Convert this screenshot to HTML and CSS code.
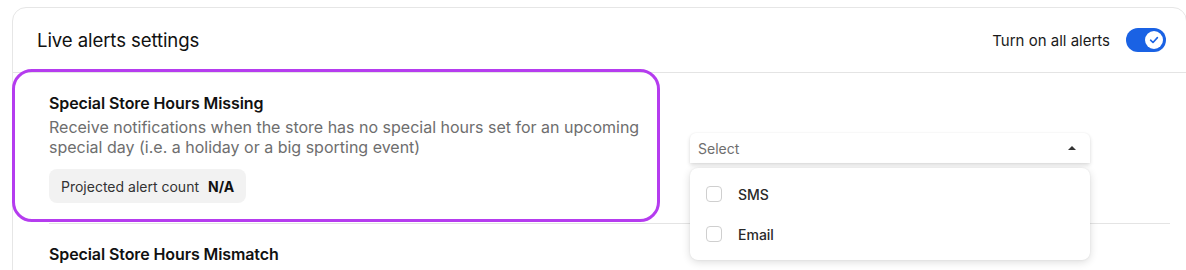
FILE: index.html
```html
<!DOCTYPE html>
<html>
<head>
<meta charset="utf-8">
<link rel="stylesheet" href="styles.css">
</head>
<body>
<div class="card">
  <div class="card-header">
    <h1 class="card-title">Live alerts settings</h1>
    <div class="master">
      <span class="master-label">Turn on all alerts</span>
      <span class="toggle">
        <span class="knob">
          <svg width="12" height="12" viewBox="0 0 12 12"><path d="M2.6 6.2 L5 8.5 L9.4 3.6" fill="none" stroke="#1a62e4" stroke-width="1.6" stroke-linecap="round" stroke-linejoin="round"/></svg>
        </span>
      </span>
    </div>
  </div>
  <div class="alert-row">
    <div class="highlight"></div>
    <div class="alert-info">
      <div class="alert-title">Special Store Hours Missing</div>
      <div class="alert-desc">Receive notifications when the store has no special hours set for an upcoming special day (i.e. a holiday or a big sporting event)</div>
      <div class="badge">Projected alert count <b>N/A</b></div>
    </div>
    <div class="select-wrap">
      <div class="select">
        <span class="placeholder">Select</span>
        <span class="caret"></span>
      </div>
      <div class="menu">
        <div class="menu-item"><span class="checkbox"></span><span>SMS</span></div>
        <div class="menu-item"><span class="checkbox"></span><span>Email</span></div>
      </div>
    </div>
  </div>
  <div class="divider"></div>
  <div class="alert-row">
    <div class="alert-info">
      <div class="alert-title">Special Store Hours Mismatch</div>
    </div>
  </div>
</div>
</body>
</html>
```

FILE: styles.css
```css
html, body {
  margin: 0;
  padding: 0;
  background: #ffffff;
  overflow: hidden;
}
body {
  font-family: Inter, "Liberation Sans", sans-serif;
  color: #141414;
}
.card {
  margin: 7px 0 0 12px;
  width: 1175px;
  height: 400px;
  box-sizing: border-box;
  border: 1px solid #e6e6e6;
  border-radius: 14px;
  background: #fff;
}
.card-header {
  height: 64px;
  border-bottom: 1px solid #e4e4e4;
  display: flex;
  align-items: center;
  justify-content: space-between;
  padding: 0 20px 0 24px;
}
.card-title {
  margin: 0;
  font-size: 18.6px;
  font-weight: 400;
  letter-spacing: -0.1px;
  color: #111;
}
.master {
  display: flex;
  align-items: center;
  gap: 16px;
}
.master-label {
  font-size: 15px;
  color: #1a1a1a;
}
.toggle {
  width: 40px;
  height: 24px;
  border-radius: 12px;
  background: #1a62e4;
  display: flex;
  align-items: center;
  justify-content: flex-end;
  padding: 0 3px;
  box-sizing: border-box;
}
.knob {
  width: 18px;
  height: 18px;
  border-radius: 50%;
  background: #fff;
  display: flex;
  align-items: center;
  justify-content: center;
}
.alert-row {
  position: relative;
  display: flex;
  align-items: center;
  padding: 20px 0 20px 36px;
}
.highlight {
  position: absolute;
  left: -1px;
  top: -4px;
  width: 648px;
  height: 153px;
  box-sizing: border-box;
  border: 3px solid #b53cef;
  border-radius: 20px;
  pointer-events: none;
}
.alert-info {
  flex: 0 0 641px;
}
.alert-title {
  font-size: 16px;
  line-height: 20px;
  font-weight: 600;
  letter-spacing: -0.1px;
  color: #111;
}
.alert-desc {
  margin-top: 4px;
  font-size: 16px;
  line-height: 20px;
  color: #6e6e6e;
  width: 620px;
}
.badge {
  margin-top: 12px;
  display: inline-flex;
  align-items: center;
  gap: 9px;
  height: 34px;
  padding: 0 12px;
  background: #f2f2f2;
  border-radius: 8px;
  font-size: 14px;
  color: #333;
}
.badge b {
  font-weight: 700;
  color: #111;
}
.select-wrap {
  position: relative;
  width: 400px;
}
.select {
  height: 30px;
  display: flex;
  align-items: center;
  justify-content: space-between;
  padding: 0 14px 0 8px;
  background: #fff;
  border-radius: 6px 6px 0 0;
  box-shadow: 0 2px 4px rgba(0,0,0,0.14), 0 0 2px rgba(0,0,0,0.06);
}
.placeholder {
  font-size: 14px;
  color: #6e6e6e;
}
.caret {
  width: 0;
  height: 0;
  border-left: 4px solid transparent;
  border-right: 4px solid transparent;
  border-bottom: 4px solid #333;
}
.menu {
  position: absolute;
  left: 0;
  top: 35px;
  width: 400px;
  padding: 6px 0;
  background: #fff;
  border-radius: 8px;
  box-shadow: 0 2px 8px rgba(0,0,0,0.14), 0 0 2px rgba(0,0,0,0.08);
  z-index: 2;
}
.menu-item {
  height: 40px;
  display: flex;
  align-items: center;
  gap: 16px;
  padding-left: 16px;
  font-size: 14px;
  font-weight: 500;
  color: #2a2a2a;
}
.checkbox {
  width: 16px;
  height: 16px;
  box-sizing: border-box;
  border: 1px solid #cfcfcf;
  border-radius: 4px;
  background: #fff;
}
.divider {
  height: 1px;
  background: #e4e4e4;
  margin: 0 16px 0 36px;
}
```
